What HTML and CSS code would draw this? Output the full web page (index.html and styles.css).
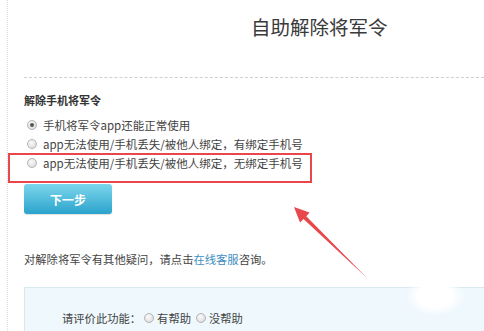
FILE: index.html
```html
<!DOCTYPE html>
<html lang="zh-CN">
<head>
<meta charset="utf-8">
<title>自助解除将军令</title>
<link rel="stylesheet" href="styles.css">
</head>
<body>
<div class="page">
  <div class="head">
    <h1 class="title">自助解除将军令</h1>
  </div>
  <h2 class="section">解除手机将军令</h2>
  <ul class="options">
    <li class="opt"><span class="radio checked"></span>手机将军令app还能正常使用</li>
    <li class="opt"><span class="radio"></span>app无法使用/手机丢失/被他人绑定，有绑定手机号</li>
    <li class="opt"><span class="radio"></span>app无法使用/手机丢失/被他人绑定，无绑定手机号</li>
  </ul>
  <button class="next">下一步</button>
  <p class="help">对解除将军令有其他疑问，请点击<a class="link" href="#">在线客服</a>咨询。</p>
  <div class="rate">
    <span class="rate-label">请评价此功能：</span>
    <span class="rate-opt"><span class="radio"></span>有帮助</span>
    <span class="rate-opt"><span class="radio"></span>没帮助</span>
  </div>
</div>
<div class="highlight"></div>
<svg class="arrow" width="484" height="331" viewBox="0 0 484 331">
  <polygon points="294,207 309.5,212.5 306.3,216.2 367,278 303.5,219 300,222.5" fill="#e8474b"/>
</svg>
<div class="blob"></div>
</body>
</html>
```
FILE: styles.css
```css
html, body {
  margin: 0;
  padding: 0;
  background: #fff;
  width: 484px;
  height: 331px;
  overflow: hidden;
  font-family: "Noto Sans CJK SC", "Noto Sans", sans-serif;
  color: #333;
}
.page {
  margin-left: 7px;
  border-left: 1px dotted #dcdcdc;
  padding-left: 16px;
  height: 331px;
  box-sizing: border-box;
}
.head {
  height: 77px;
  border-bottom: 1px dashed #cfcfcf;
  box-sizing: content-box;
}
.title {
  margin: 0;
  padding: 15px 0 0 227px;
  font-size: 19.5px;
  line-height: 24px;
  font-weight: 400;
  color: #3a3a3a;
}
.section {
  margin: 14px 0 0;
  font-size: 11px;
  line-height: 16px;
  font-weight: 700;
  color: #333;
}
.options {
  list-style: none;
  margin: 7px 0 0;
  padding: 0;
}
.opt {
  display: flex;
  align-items: center;
  height: 19px;
  font-size: 11.5px;
  color: #444;
}
.radio {
  display: inline-block;
  width: 8px;
  height: 8px;
  border-radius: 50%;
  border: 1px solid #b4b4b4;
  background: radial-gradient(circle at 40% 35%, #fafafa, #d6d6d6);
  box-sizing: content-box;
  position: relative;
  flex: none;
}
.opt .radio {
  margin: 0 6px 0 3px;
}
.radio.checked::after {
  content: "";
  position: absolute;
  left: 2px;
  top: 2px;
  width: 4px;
  height: 4px;
  border-radius: 50%;
  background: #555;
}
.next {
  display: block;
  margin-top: 12px;
  width: 88px;
  height: 30px;
  border: 0;
  border-radius: 3px;
  background: linear-gradient(#7dd6ec, #2ba3cc);
  color: #fff;
  font-family: inherit;
  font-size: 12px;
  font-weight: 700;
  padding: 0;
  box-shadow: 0 1px 1px rgba(0,0,0,0.12);
}
.help {
  margin: 37px 0 0;
  font-size: 11.3px;
  line-height: 16px;
  color: #444;
}
.link {
  color: #3d8dbf;
  text-decoration: none;
}
.rate {
  margin-top: 20px;
  margin-right: -10px;
  height: 60px;
  background: #eef8fd;
  border-top: 1px solid #d9e9f1;
  border-left: 1px solid #d9e9f1;
  padding: 22px 0 0 37px;
  box-sizing: border-box;
  display: flex;
  align-items: center;
  align-content: flex-start;
  height: 60px;
  font-size: 11.3px;
  color: #444;
}
.rate {
  align-items: flex-start;
  line-height: 16px;
}
.rate-opt {
  display: inline-flex;
  align-items: center;
  margin-left: 3px;
}
.rate-opt .radio {
  margin-right: 3px;
}
.rate-opt + .rate-opt {
  margin-left: 5px;
}
.highlight {
  position: absolute;
  left: 8px;
  top: 153px;
  width: 304px;
  height: 30px;
  border: 2.5px solid #e8474b;
  box-sizing: border-box;
}
.arrow {
  position: absolute;
  left: 0;
  top: 0;
  pointer-events: none;
}
.blob {
  position: absolute;
  left: 405px;
  top: 276px;
  width: 60px;
  height: 40px;
  background: radial-gradient(ellipse at center, #fff 40%, rgba(255,255,255,0) 72%);
}
```
